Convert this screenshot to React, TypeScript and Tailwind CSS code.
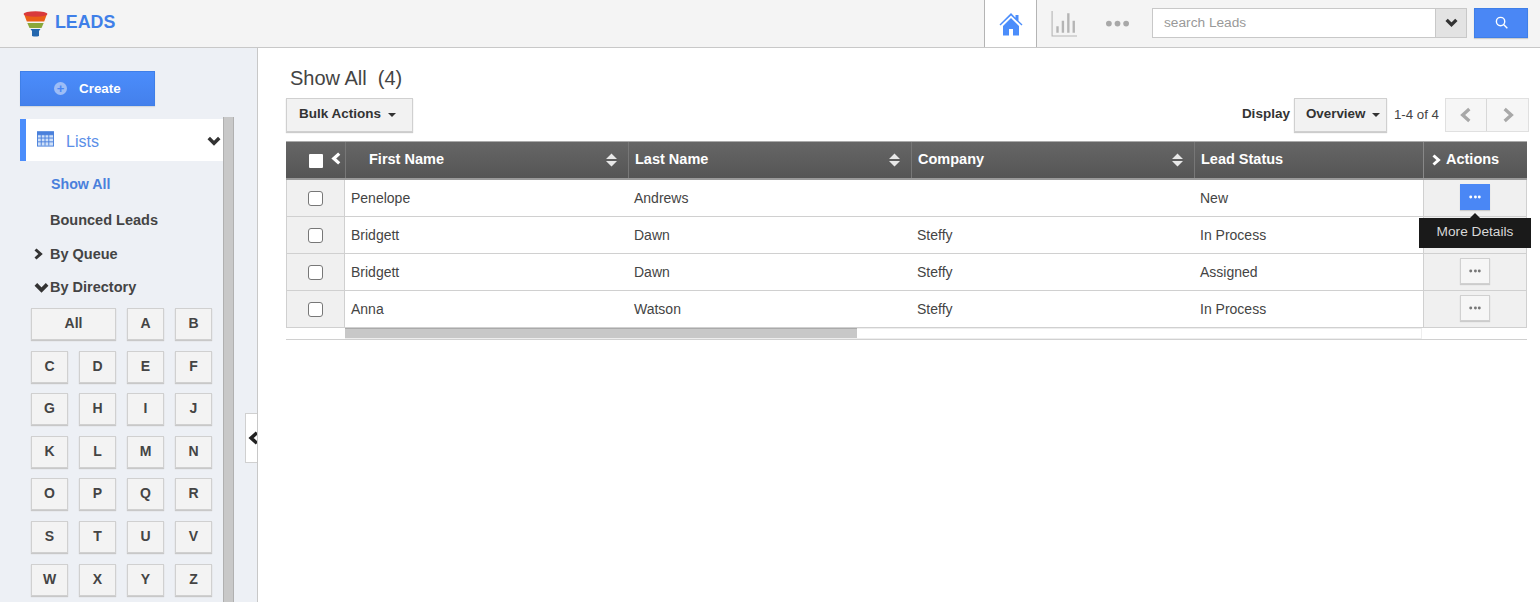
import React from "react";

const Chev = ({ d, className, w = 3 }: { d: "l" | "r" | "d"; className?: string; w?: number }) => (
  <svg viewBox="0 0 12 12" className={className} fill="none" stroke="currentColor" strokeWidth={w} strokeLinecap="butt" strokeLinejoin="miter">
    {d === "l" && <path d="M8.500 1.500 3.500 6l5 4.500" />}
    {d === "r" && <path d="M3.500 1.500 8.500 6l-5 4.500" />}
    {d === "d" && <path d="M1.500 3.500 6 8l4.500-4.500" />}
  </svg>
);

const Caret = ({ className }: { className?: string }) => (
  <span className={`inline-block w-0 h-0 border-x-[4.500px] border-x-transparent border-t-[4.500px] ${className ?? "border-t-[#333]"}`} />
);

const Sort = () => (
  <svg viewBox="0 0 11 14" className="w-[11px] h-[14px] text-[#e8e8e8]" fill="currentColor">
    <path d="M5.500 0.500 11 6H0zM5.500 13.500 0 8h11z" />
  </svg>
);

const Dots = ({ className }: { className?: string }) => (
  <svg viewBox="0 0 14 4" className={`w-[12px] h-[4px] ${className ?? ""}`} fill="currentColor">
    <circle cx="2" cy="2" r="1.700" />
    <circle cx="7.500" cy="2" r="1.700" />
    <circle cx="12" cy="2" r="1.700" />
  </svg>
);

const rows = [
  ["Penelope", "Andrews", "", "New"],
  ["Bridgett", "Dawn", "Steffy", "In Process"],
  ["Bridgett", "Dawn", "Steffy", "Assigned"],
  ["Anna", "Watson", "Steffy", "In Process"],
];

const letterRows = [
  ["C", "D", "E", "F"],
  ["G", "H", "I", "J"],
  ["K", "L", "M", "N"],
  ["O", "P", "Q", "R"],
  ["S", "T", "U", "V"],
  ["W", "X", "Y", "Z"],
];

const LetterBtn = ({ t, cls = "" }: { t: string; cls?: string }) => (
  <div className={`h-[32px] pb-[1px] bg-[#f3f3f3] border border-[#d0d0d0] shadow-[0_1px_1px_#c8c8c8] flex items-center justify-center text-[14px] font-bold text-[#444] ${cls}`}>
    {t}
  </div>
);

const gridCols = "grid grid-cols-[59px_283px_283px_283px_229px_104px]";

export default function App() {
  return (
    <div className="w-[1540px] h-[602px] overflow-hidden flex flex-col bg-white font-['Liberation_Sans',Arial,sans-serif] text-[#444]">
      {/* Top bar */}
      <header className="h-[48px] shrink-0 bg-[#f4f4f4] border-b border-[#c8c8c8] flex items-stretch">
        <div className="flex items-center pl-[23px] gap-[7px]">
          <svg viewBox="0 0 25 26" className="w-[25px] h-[26px]">
            <path d="M1 3h23l-2.800 7.500H3.800z" fill="#ea5f16" />
            <ellipse cx="12.500" cy="3" rx="12" ry="2.800" fill="#d9393b" />
            <path d="M4.300 12h16.400l-2.200 5H6.500z" fill="#8aa83a" />
            <path d="M7.500 18h10l-1.500 2v5q-3.500 1.200-7 0v-5z" fill="#2467ae" />
          </svg>
          <span className="text-[17.800px] font-bold text-[#3f7fe8] mb-[3px]">LEADS</span>
        </div>
        <div className="ml-auto flex items-stretch">
          <div className="w-[53px] bg-white border-x border-[#b4b4b4] flex items-center justify-center h-[47px]">
            <svg viewBox="0 0 24 24" className="w-[24px] h-[24px]" fill="#4b8dfb">
              <path d="M12 1 .500 12.500l1 1L12 3.500l10.500 10 1-1-4-3.800V3h-3v2.800z" />
              <path d="M4 14 12 6l8 8v9.500h-6V17h-4v6.500H4z" />
            </svg>
          </div>
          <div className="w-[54px] flex items-center justify-center">
            <svg viewBox="0 0 24 24" className="w-[26px] h-[26px]" fill="none" stroke="#b5b5b5" strokeWidth="1">
              <path d="M1 0v23h23" />
              <path d="M6 20v-6M11 20V9M16 20V2M21 20V9" strokeWidth="2.200" />
            </svg>
          </div>
          <div className="w-[30px] mr-[20px] ml-[11px] flex items-center justify-center">
            <svg viewBox="0 0 24 6" className="w-[23px] h-[7px]" fill="#a8a8a8">
              <circle cx="3" cy="3" r="3" />
              <circle cx="12" cy="3" r="3" />
              <circle cx="21" cy="3" r="3" />
            </svg>
          </div>
          <div className="flex items-center mb-[2px]">
            <div className="w-[315px] h-[30px] flex bg-white border border-[#c8c8c8]">
              <div className="flex-1 pl-[11px] text-[13.700px] leading-[27px] text-[#999]">search Leads</div>
              <div className="w-[31px] bg-[#e3e3e3] border-l border-[#c8c8c8] flex items-center justify-center text-[#333]">
                <Chev d="d" className="w-[13px] h-[13px]" />
              </div>
            </div>
            <div className="w-[54px] h-[30px] ml-[7px] mr-[12px] bg-[#4a87f5] border border-[#3f7fe8] shadow-[0_1px_1px_#ccc] flex items-center justify-center">
              <svg viewBox="0 0 14 14" className="w-[13px] h-[13px]" fill="none" stroke="#fff" strokeWidth="1.500">
                <circle cx="6" cy="6" r="4.500" />
                <path d="m9.500 9.500 3.800 3.800" />
              </svg>
            </div>
          </div>
        </div>
      </header>

      <div className="flex-1 flex min-h-0">
        {/* Sidebar */}
        <aside className="relative w-[258px] shrink-0 bg-[#edf0f5] border-r border-[#c8c8c8] pt-[23px]">
          <div className="ml-[20px] w-[135px] h-[35px] bg-gradient-to-b from-[#4b8dfb] to-[#4480ec] border border-[#3f7fe8] shadow-[0_1px_1px_#d5d8de] flex items-center pl-[33px] gap-[12px] text-white">
            <span className="w-[13px] h-[13px] rounded-full bg-[#9dbdf6] flex items-center justify-center text-[#4a87f5] text-[13px] font-bold leading-none">+</span>
            <span className="text-[13.400px] font-bold mt-[1px]">Create</span>
          </div>
          <div className="flex mt-[13px] h-[485px]">
            <div className="w-[203px] ml-[20px]">
              <div className="h-[42px] bg-white border-l-[6px] border-[#4b8dfb] flex items-center pl-[11px] text-[#5b8fe8]">
                <svg viewBox="0 0 18 16" className="w-[17px] h-[16px] mb-[2px]" fill="none" stroke="#4a80dc" strokeWidth="1">
                  <rect x="0.500" y="0.500" width="17" height="15" fill="#cfe0f8" />
                  <rect x="0.500" y="0.500" width="17" height="3" fill="#4a80dc" />
                  <path d="M4.500 3v12M8.500 3v12M12.500 3v12M1 7h16M1 11h16" />
                </svg>
                <span className="ml-[12px] text-[16px] mt-[3px]">Lists</span>
                <Chev d="d" className="w-[14px] h-[14px] ml-auto mr-[2px] mt-[2px] text-[#333]" />
              </div>
              <div className="pl-[31px] pt-[14px] text-[14.200px] font-bold leading-[18px] text-[#4a80dc]">Show All</div>
              <div className="pl-[30px] pt-[18px] text-[14.500px] font-bold leading-[18px] text-[#444]">Bounced Leads</div>
              <div className="pl-[12px] pt-[16px] flex items-center text-[14.500px] font-bold leading-[18px] text-[#444]">
                <Chev d="r" className="w-[12px] h-[12px] text-[#333]" />
                <span className="ml-[6px]">By Queue</span>
              </div>
              <div className="pl-[13px] pt-[15px] flex items-center text-[14.500px] font-bold leading-[18px] text-[#444]">
                <Chev d="d" className="w-[17px] h-[15px] text-[#333]" />
                <span>By Directory</span>
              </div>
              <div className="ml-[11px] mt-[12px] w-[181px] flex flex-col gap-[10.600px]">
                <div className="grid grid-cols-[37px_37px_37px_37px] gap-x-[11px]">
                  <LetterBtn t="All" cls="col-span-2" />
                  <LetterBtn t="A" />
                  <LetterBtn t="B" />
                </div>
                {letterRows.map((r) => (
                  <div key={r[0]} className="grid grid-cols-[37px_37px_37px_37px] gap-x-[11px]">
                    {r.map((l) => (
                      <LetterBtn key={l} t={l} />
                    ))}
                  </div>
                ))}
              </div>
            </div>
            <div className="w-[11px] -mt-[2px] bg-[#c8c8c8] border-x border-[#b0b0b0]" />
          </div>
          <div className="absolute right-0 top-[365px] w-[12px] h-[50px] bg-white border border-r-0 border-[#d0d0d0] flex items-center justify-start pl-[1px] text-[#222] overflow-hidden">
            <Chev d="l" className="w-[14px] h-[14px] shrink-0" />
          </div>
        </aside>

        {/* Main */}
        <main className="flex-1 pl-[28px] pr-[13px] min-w-0">
          <h1 className="pt-[18px] pl-[4px] text-[20px] leading-[24px] text-[#444] whitespace-pre">Show All  (4)</h1>
          <div className="flex items-center mt-[8px] h-[34px]">
            <div className="h-[34px] w-[127px] bg-[#f2f2f2] border border-[#d0d0d0] shadow-[0_1px_1px_#ccc] flex items-center pl-[12px] text-[13.500px] font-bold text-[#333] gap-[7px]">
              <span className="mb-[1px]">Bulk Actions</span> <Caret />
            </div>
            <div className="ml-auto flex items-center">
              <span className="text-[13.500px] font-bold text-[#333] mr-[4px] mb-[1px]">Display</span>
              <div className="h-[34px] w-[93px] bg-[#f2f2f2] border border-[#d0d0d0] shadow-[0_1px_1px_#ccc] flex items-center pl-[11px] text-[13.400px] font-bold text-[#333] gap-[7px]">
                <span className="mb-[1px]">Overview</span> <Caret />
              </div>
              <span className="ml-[7px] text-[13.300px] text-[#444] mr-[6px]">1-4 of 4</span>
              <div className="flex h-[34px] border border-[#e0e0e0] bg-[#f6f6f6] mr-[-2px]">
                <div className="w-[41px] flex items-center justify-center text-[#a8a8a8] border-r border-[#d8d8d8]">
                  <Chev d="l" className="w-[16px] h-[16px]" w={2.500} />
                </div>
                <div className="w-[41px] flex items-center justify-center text-[#a8a8a8]">
                  <Chev d="r" className="w-[16px] h-[16px]" w={2.500} />
                </div>
              </div>
            </div>
          </div>

          {/* Table */}
          <div className="relative mt-[9px] w-[1241px]">
            <div className={`${gridCols} h-[39px] bg-gradient-to-b from-[#666] to-[#555] border-b-2 border-[#9a9a9a] border-t border-t-[#aaa] text-white text-[14.500px] font-bold`}>
              <div className="flex items-center pl-[23px] gap-[7px]">
                <span className="w-[14px] h-[14px] bg-white rounded-[1px] mt-[2px]" />
                <Chev d="l" className="w-[13px] h-[13px] mb-[3px]" />
              </div>
              <div className="flex items-center pl-[23px] pr-[11px] pb-[1px] border-l border-[#777]">
                <span>First Name</span>
                <span className="ml-auto"><Sort /></span>
              </div>
              <div className="flex items-center pl-[6px] pr-[11px] pb-[1px] border-l border-[#777]">
                <span>Last Name</span>
                <span className="ml-auto"><Sort /></span>
              </div>
              <div className="flex items-center pl-[6px] pr-[11px] pb-[1px] border-l border-[#777]">
                <span>Company</span>
                <span className="ml-auto"><Sort /></span>
              </div>
              <div className="flex items-center pl-[6px] pb-[1px] border-l border-[#777]">
                <span>Lead Status</span>
              </div>
              <div className="flex items-center pl-[6px] pb-[1px] gap-[4px] border-l border-[#888]">
                <Chev d="r" className="w-[12px] h-[12px]" />
                <span>Actions</span>
              </div>
            </div>
            {rows.map((r, i) => (
              <div key={i} className={`${gridCols} h-[37px] border-b border-[#d0d0d0] text-[14px] text-[#444]`}>
                <div className="bg-[#f0f0f0] border-x border-[#d0d0d0] flex items-center justify-center pr-[1px]">
                  <span className="w-[15px] h-[15px] bg-white border border-[#777] rounded-[3px]" />
                </div>
                <div className="flex items-center pl-[6px]">{r[0]}</div>
                <div className="flex items-center pl-[6px]">{r[1]}</div>
                <div className="flex items-center pl-[6px]">{r[2]}</div>
                <div className="flex items-center pl-[6px]">{r[3]}</div>
                <div className="bg-[#f0f0f0] border-x border-[#d0d0d0] flex items-center justify-center">
                  {i === 0 ? (
                    <div className="w-[30px] h-[26px] bg-[#4a87f5] border border-[#4a87f5] shadow-[0_1px_1px_#ccc] flex items-center justify-center mr-[1px] mb-[3px] text-white">
                      <Dots />
                    </div>
                  ) : (
                    <div className="w-[30px] h-[26px] bg-[#f6f6f6] border border-[#d0d0d0] shadow-[0_1px_1px_#ccc] flex items-center justify-center mr-[1px] mb-[3px] text-[#777]">
                      <Dots />
                    </div>
                  )}
                </div>
              </div>
            ))}
            <div className="flex h-[12px] border-b border-[#d0d0d0]">
              <div className="w-[59px]" />
              <div className="w-[1077px] border border-l-0 border-[#eee] flex h-[11px]">
                <div className="w-[512px] h-[10px] bg-[#c8c8c8] border-t border-[#aaa] -mt-px" />
              </div>
            </div>

            {/* Tooltip */}
            <div className="absolute left-[1133px] top-[77px] w-[112px] h-[30px] bg-[#1a1a1a] text-[#d8d8d8] text-[13.700px] flex items-center justify-center pb-[1px]">
              <span className="absolute -top-[5px] left-[51px] w-0 h-0 border-x-[5px] border-x-transparent border-b-[5px] border-b-[#1a1a1a]" />
              More Details
            </div>
          </div>
        </main>
      </div>
    </div>
  );
}
